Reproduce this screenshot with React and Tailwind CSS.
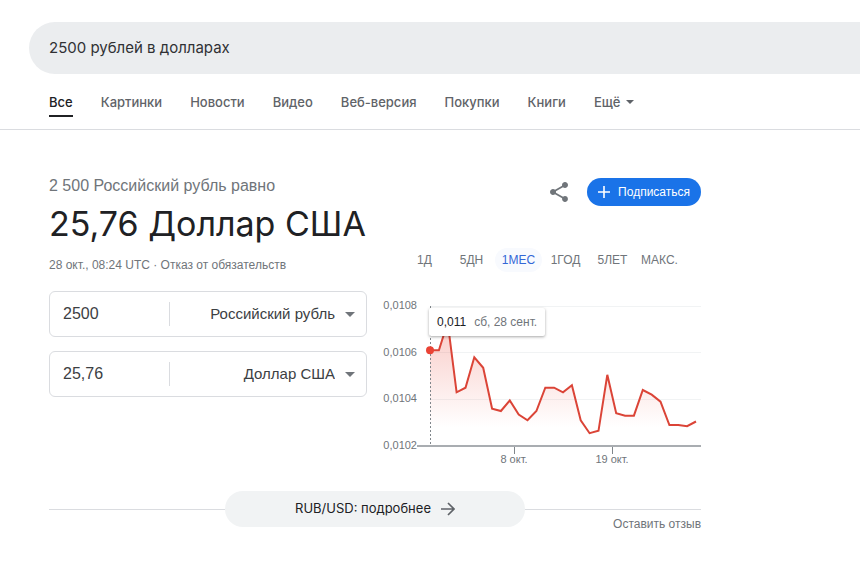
import React, { useState } from "react";

const tabs = [
  "Все",
  "Картинки",
  "Новости",
  "Видео",
  "Веб-версия",
  "Покупки",
  "Книги",
];

const ranges = ["1Д", "5ДН", "1МЕС", "1ГОД", "5ЛЕТ", "МАКС."];

const currencies = ["Российский рубль", "Доллар США"];

// One rate per day, in units of 0,0001 USD
const rates = [
  106.1, 106.1, 107.3, 104.3, 104.5, 105.8, 105.35, 103.6, 103.5, 103.95,
  103.35, 103.1, 103.5, 104.5, 104.5, 104.3, 104.6, 103.1, 102.55, 102.65,
  105.05, 103.4, 103.3, 103.3, 104.4, 104.2, 103.9, 102.9, 102.9, 102.85,
  103.05,
];

const gridLines = [
  { value: 108, label: "0,0108" },
  { value: 106, label: "0,0106" },
  { value: 104, label: "0,0104" },
  { value: 102, label: "0,0102" },
];

const LEFT = 47;
const BOTTOM = 152;
const toX = (day) => Math.round((LEFT + (day * 266) / 30) * 10) / 10;
const toY = (rate) => Math.round((BOTTOM - ((rate - 102) * 140) / 6) * 10) / 10;

function Caret({ className }) {
  return (
    <svg viewBox="0 0 10 5" className={className} aria-hidden="true">
      <path d="M0 0h10L5 5z" fill="currentColor" />
    </svg>
  );
}

function Chart() {
  const points = rates.map((rate, i) => `${toX(i)},${toY(rate)}`).join(" ");

  return (
    <div className="relative">
      <svg
        viewBox="0 0 318 176"
        className="block w-full"
        role="img"
        aria-label="Курс RUB/USD за месяц"
      >
        <defs>
          <linearGradient id="fill" x1="0" y1="0" x2="0" y2="1">
            <stop offset="0" stopColor="#ea4335" stopOpacity="0.28" />
            <stop offset="0.85" stopColor="#ea4335" stopOpacity="0" />
          </linearGradient>
        </defs>

        {gridLines.map((line) => (
          <g key={line.value}>
            <text
              x="34"
              y={toY(line.value) + 3}
              textAnchor="end"
              fontSize="11"
              fill="#70757a"
            >
              {line.label}
            </text>
            {line.value !== 102 && (
              <path d={`M${LEFT} ${Math.floor(toY(line.value))}.5H318`} stroke="#f1f3f4" />
            )}
          </g>
        ))}

        <polygon
          points={`${LEFT},${BOTTOM} ${points} ${toX(30)},${BOTTOM}`}
          fill="url(#fill)"
        />
        <path d="M34 152H318" stroke="#a9adb1" strokeWidth="2" />
        <path d="M47.5 12V152" stroke="#80868b" strokeDasharray="2 2" />
        <polyline points={points} fill="none" stroke="#db4437" strokeWidth="2" />
        <circle cx={LEFT} cy={toY(rates[0])} r="4" fill="#ea4335" />

        <path d="M131.5 153v7M229.5 153v7" stroke="#80868b" />
        <text x="131" y="169" textAnchor="middle" fontSize="11" fill="#70757a">
          8 окт.
        </text>
        <text x="229" y="169" textAnchor="middle" fontSize="11" fill="#70757a">
          19 окт.
        </text>
      </svg>

      <div className="absolute top-3.5 left-[46px] flex h-7 items-center gap-2 rounded-xs bg-white px-2 text-xs whitespace-nowrap text-[#70757a] shadow-[0_1px_3px_rgba(0,0,0,0.35)]">
        <span className="text-[#202124]">0,011</span>
        <span>сб, 28 сент.</span>
      </div>
    </div>
  );
}

function AmountField({ id, amount, onAmount, currency, onCurrency }) {
  return (
    <div className="flex h-[46px] items-center rounded-md border border-[#dadce0] pr-[11px] pl-[13px] text-[#3c4043]">
      <input
        id={`${id}-amount`}
        aria-label="Сумма"
        className="w-[106px] min-w-0 text-base outline-none"
        value={amount}
        onChange={(e) => onAmount(e.target.value)}
      />
      <label
        htmlFor={`${id}-currency`}
        className="flex min-w-0 flex-1 items-center gap-2.5 border-l border-[#dadce0]"
      >
        <select
          id={`${id}-currency`}
          aria-label="Валюта"
          className="min-w-0 flex-1 appearance-none bg-transparent text-right text-[15px] leading-6 outline-none [text-align-last:right]"
          value={currency}
          onChange={(e) => onCurrency(e.target.value)}
        >
          {currencies.map((name) => (
            <option key={name}>{name}</option>
          ))}
        </select>
        <Caret className="w-2.5 text-[#70757a]" />
      </label>
    </div>
  );
}

function App() {
  const [query, setQuery] = useState("2500 рублей в долларах");
  const [range, setRange] = useState("1МЕС");
  const [from, setFrom] = useState("2500");
  const [to, setTo] = useState("25,76");
  const [fromCurrency, setFromCurrency] = useState(currencies[0]);
  const [toCurrency, setToCurrency] = useState(currencies[1]);

  return (
    <div className="min-h-screen overflow-x-hidden bg-white font-['Liberation_Sans',Arial,sans-serif] text-[#70757a]">
      <header className="border-b border-[#dadce0] pt-[22px] pb-3">
        <div className="ml-[29px] flex h-[52px] items-center rounded-l-full bg-[#ebedef] pl-5">
          <input
            aria-label="Поиск"
            className="w-full font-['Inter',sans-serif] text-[15px] text-[#303134] outline-none"
            value={query}
            onChange={(e) => setQuery(e.target.value)}
          />
        </div>
        <nav className="mt-4 flex items-start gap-7 pl-[49px] font-['Inter',sans-serif] text-[13px] leading-6 font-medium whitespace-nowrap text-[#5f6368]">
          {tabs.map((tab, i) => (
            <a
              key={tab}
              href="#"
              className={
                i === 0 ? "border-b-2 border-[#202124] pb-px text-[#202124]" : ""
              }
            >
              {tab}
            </a>
          ))}
          <button className="flex items-center gap-1.5">
            Ещё
            <Caret className="w-2" />
          </button>
        </nav>
      </header>

      <main className="ml-[49px] max-w-[652px] pt-12">
        <div className="flex items-start justify-between">
          <div>
            <p className="text-base leading-4">2 500 Российский рубль равно</p>
            <h1 className="mt-2 font-['Inter',sans-serif] text-[34px] leading-11 text-[#202124]">
              25,76 Доллар США
            </h1>
          </div>
          <div className="flex items-center gap-4">
            <button aria-label="Поделиться">
              <svg viewBox="0 0 24 24" className="w-6" fill="#70757a">
                <path d="M18 16.08c-.76 0-1.44.3-1.96.77L8.91 12.7c.05-.23.09-.46.09-.7s-.04-.47-.09-.7l7.05-4.11c.54.5 1.25.81 2.04.81 1.66 0 3-1.34 3-3s-1.34-3-3-3-3 1.34-3 3c0 .24.04.47.09.7L8.04 9.81C7.5 9.31 6.79 9 6 9c-1.66 0-3 1.34-3 3s1.34 3 3 3c.79 0 1.5-.31 2.04-.81l7.12 4.16c-.05.21-.08.43-.08.65 0 1.61 1.31 2.92 2.92 2.92s2.92-1.31 2.92-2.92-1.31-2.92-2.92-2.92z" />
              </svg>
            </button>
            <button className="flex h-7 items-center gap-2 rounded-full bg-[#1a73e8] px-[11px] text-xs text-white">
              <svg viewBox="0 0 12 12" className="w-3" stroke="#fff" strokeWidth="1.6">
                <path d="M6 0v12M0 6h12" />
              </svg>
              Подписаться
            </button>
          </div>
        </div>

        <div className="flex gap-4">
          <section className="w-[318px] shrink-0">
            <p className="pt-[11px] text-xs leading-4">
              28 окт., 08:24 UTC · <a href="#">Отказ от обязательств</a>
            </p>
            <div className="mt-[18px] flex flex-col gap-3.5">
              <AmountField
                id="from"
                amount={from}
                onAmount={setFrom}
                currency={fromCurrency}
                onCurrency={setFromCurrency}
              />
              <AmountField
                id="to"
                amount={to}
                onAmount={setTo}
                currency={toCurrency}
                onCurrency={setToCurrency}
              />
            </div>
          </section>

          <section className="min-w-0 flex-1 pt-0.5">
            <div className="flex pl-[18px] text-xs">
              {ranges.map((item) => (
                <button
                  key={item}
                  onClick={() => setRange(item)}
                  className={`h-6 w-[47px] shrink-0 rounded-full text-center ${
                    item === range ? "bg-[#f8fafe] text-[#3367d6]" : ""
                  }`}
                >
                  {item}
                </button>
              ))}
            </div>
            <div className="mt-[22px]">
              <Chart />
            </div>
          </section>
        </div>

        <footer className="pt-[21px]">
          <div className="flex items-start">
            <div className="mt-[18px] h-px flex-1 bg-[#dadce0]" />
            <a
              href="#"
              className="flex h-9 w-[300px] items-center justify-center gap-2.5 rounded-full bg-[#f1f3f4] font-['Inter',sans-serif] text-[13px] text-[#202124]"
            >
              RUB/USD: подробнее
              <svg
                viewBox="0 0 14 14"
                className="w-3.5"
                fill="none"
                stroke="#5f6368"
                strokeWidth="1.7"
              >
                <path d="M0 7h13M7 1l6 6-6 6" />
              </svg>
            </a>
            <div className="mt-[18px] flex-1 border-t border-[#dadce0] pt-1.5 text-right text-xs">
              <a href="#">Оставить отзыв</a>
            </div>
          </div>
        </footer>
      </main>
    </div>
  );
}

export default App;
